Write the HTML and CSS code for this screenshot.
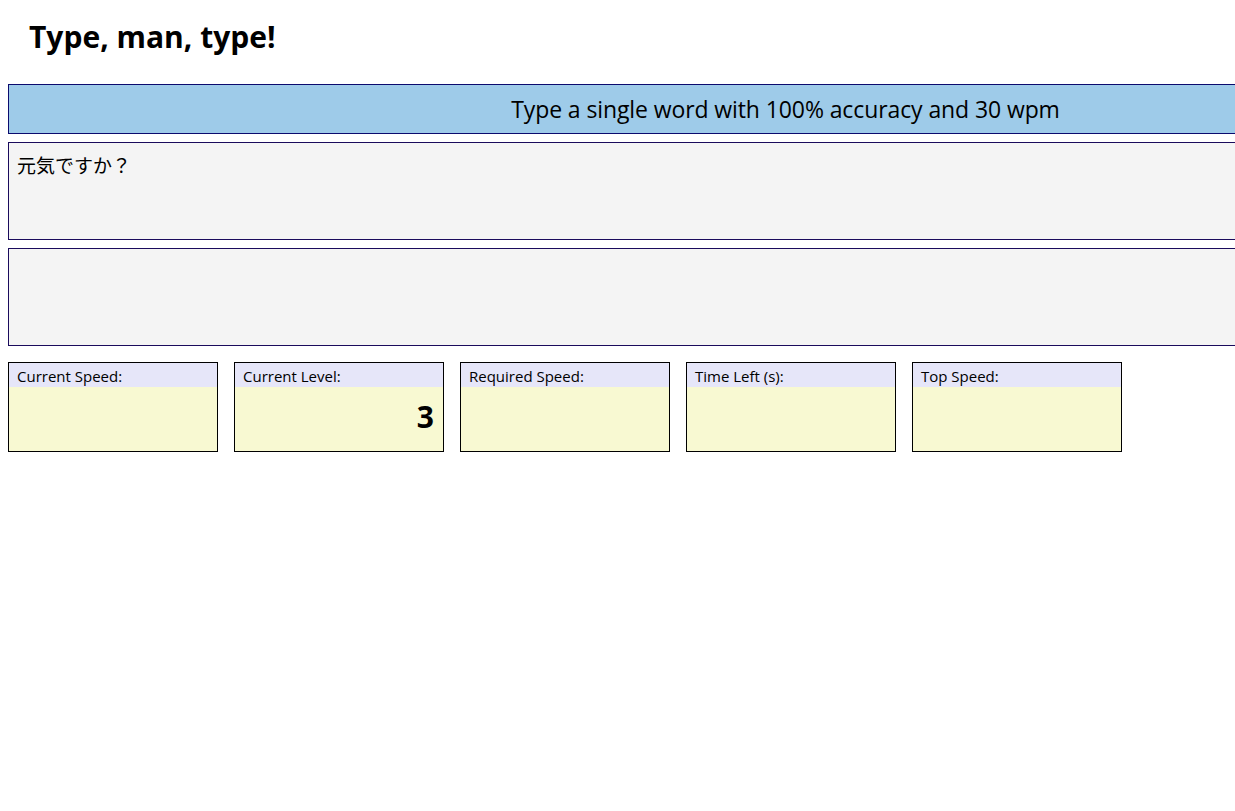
FILE: index.html
```html
<!DOCTYPE html>
<html lang="ja">
<head>
<meta charset="utf-8">
<title>Type, man, type!</title>
<link rel="stylesheet" href="styles.css">
</head>
<body>
<h1 class="title">Type, man, type!</h1>
<div class="banner">Type a single word with 100% accuracy and 30 wpm</div>
<div class="panel target">元気ですか？</div>
<div class="panel input"></div>
<div class="stats">
  <div class="stat"><div class="stat-label">Current Speed:</div><div class="stat-value"></div></div>
  <div class="stat"><div class="stat-label">Current Level:</div><div class="stat-value">3</div></div>
  <div class="stat"><div class="stat-label">Required Speed:</div><div class="stat-value"></div></div>
  <div class="stat"><div class="stat-label">Time Left (s):</div><div class="stat-value"></div></div>
  <div class="stat"><div class="stat-label">Top Speed:</div><div class="stat-value"></div></div>
</div>
</body>
</html>
```
FILE: styles.css
```css
body {
  margin: 8px 0 8px 8px;
  font-family: "Open Sans", "Noto Sans CJK JP", sans-serif;
  color: #000;
  background: #fff;
}
.title {
  font-size: 30px;
  font-weight: 700;
  margin: 8px 0 26px 21px;
  line-height: 42px;
}
.banner {
  box-sizing: border-box;
  height: 50px;
  border: 1px solid #0b0b6e;
  border-right: none;
  background: #9ecbe9;
  font-size: 23px;
  line-height: 48px;
  text-align: center;
  letter-spacing: -0.1px;
  padding-left: 327px;
  white-space: nowrap;
}
.panel {
  box-sizing: border-box;
  height: 98px;
  margin-top: 8px;
  border: 1px solid #1a0b5c;
  border-right: none;
  background: #f4f4f4;
  padding: 9px 8px 8px;
  font-size: 19px;
  line-height: 26px;
}
.target {
  font-family: "Noto Sans CJK JP", sans-serif;
}
.stats {
  display: flex;
  gap: 16px;
  margin-top: 16px;
}
.stat {
  width: 210px;
  height: 90px;
  box-sizing: border-box;
  border: 1px solid #000;
  background: #f8f9d2;
  display: flex;
  flex-direction: column;
}
.stat-label {
  background: #e6e6f9;
  font-size: 15px;
  line-height: 26px;
  height: 24px;
  padding-left: 8px;
}
.stat-value {
  flex: 1;
  text-align: right;
  padding-right: 9px;
  font-size: 30px;
  font-weight: 700;
  line-height: 60px;
}
```
